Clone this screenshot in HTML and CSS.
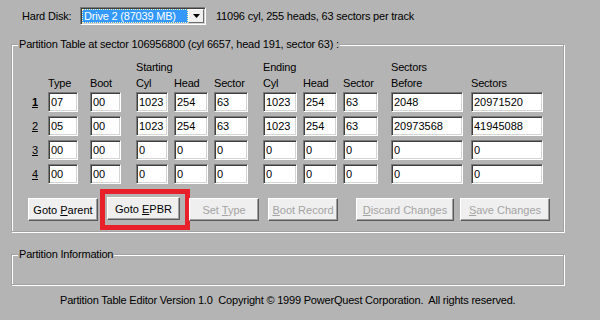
FILE: index.html
```html
<!DOCTYPE html>
<html lang="en">
<head>
  <meta charset="UTF-8">
  <title>Partition Table Editor</title>
  <link rel="stylesheet" href="styles.css">
</head>
<body>
  <div class="window">
    <div class="disk-row">
      <span class="disk-label">Hard Disk:</span>
      <div class="combo">
        <span class="combo-text"><span class="combo-focus">Drive 2 (87039 MB)</span></span>
        <span class="combo-btn">
          <svg width="7" height="4" viewBox="0 0 7 4"><path d="M0 0h7L3.5 4z" fill="#000"/></svg>
        </span>
      </div>
      <span class="geometry">11096 cyl, 255 heads, 63 sectors per track</span>
    </div>

    <fieldset class="group table-group">
      <legend>Partition Table at sector 106956800 (cyl 6657, head 191, sector 63) :</legend>

      <div class="ptable">
        <span></span><span></span><span></span>
        <span class="hd">Starting</span><span></span><span></span>
        <span class="hd">Ending</span><span></span><span></span>
        <span class="hd">Sectors</span><span></span>

        <span></span>
        <span class="hd">Type</span><span class="hd">Boot</span>
        <span class="hd">Cyl</span><span class="hd">Head</span><span class="hd">Sector</span>
        <span class="hd">Cyl</span><span class="hd">Head</span><span class="hd">Sector</span>
        <span class="hd">Before</span><span class="hd">Sectors</span>

        <span class="rownum current">1</span>
        <input class="cell w30" value="07"><input class="cell w31" value="00">
        <input class="cell w32" value="1023"><input class="cell w34" value="254"><input class="cell w34" value="63">
        <input class="cell w34" value="1023"><input class="cell w34" value="254"><input class="cell w35" value="63">
        <input class="cell w72" value="2048"><input class="cell w72" value="20971520">

        <span class="rownum">2</span>
        <input class="cell w30" value="05"><input class="cell w31" value="00">
        <input class="cell w32" value="1023"><input class="cell w34" value="254"><input class="cell w34" value="63">
        <input class="cell w34" value="1023"><input class="cell w34" value="254"><input class="cell w35" value="63">
        <input class="cell w72" value="20973568"><input class="cell w72" value="41945088">

        <span class="rownum">3</span>
        <input class="cell w30" value="00"><input class="cell w31" value="00">
        <input class="cell w32" value="0"><input class="cell w34" value="0"><input class="cell w34" value="0">
        <input class="cell w34" value="0"><input class="cell w34" value="0"><input class="cell w35" value="0">
        <input class="cell w72" value="0"><input class="cell w72" value="0">

        <span class="rownum">4</span>
        <input class="cell w30" value="00"><input class="cell w31" value="00">
        <input class="cell w32" value="0"><input class="cell w34" value="0"><input class="cell w34" value="0">
        <input class="cell w34" value="0"><input class="cell w34" value="0"><input class="cell w35" value="0">
        <input class="cell w72" value="0"><input class="cell w72" value="0">
      </div>

      <div class="buttons">
        <button class="btn b-parent">Goto <u>P</u>arent</button>
        <span class="highlight"><button class="btn b-epbr">Goto <u>E</u>PBR</button></span>
        <button class="btn b-type" disabled>Set <u>T</u>ype</button>
        <button class="btn b-boot" disabled><u>B</u>oot Record</button>
        <button class="btn b-discard" disabled><u>D</u>iscard Changes</button>
        <button class="btn b-save" disabled><u>S</u>ave Changes</button>
      </div>
    </fieldset>

    <fieldset class="group info-group">
      <legend>Partition Information</legend>
    </fieldset>

    <p class="copyright">Partition Table Editor Version 1.0&nbsp; Copyright &copy; 1999 PowerQuest Corporation.&nbsp; All rights reserved.</p>
  </div>
</body>
</html>
```

FILE: styles.css
```css
body {
  margin: 0;
  background: #b4b4b4;
  font-family: "Liberation Sans", Arial, sans-serif;
  font-size: 11px;
  letter-spacing: -0.2px;
  color: #000;
}
.window {
  width: 600px;
  height: 320px;
  overflow: hidden;
}

/* top line */
.disk-row {
  display: flex;
  align-items: center;
  height: 18px;
  padding-top: 7px;
}
.disk-label {
  margin-left: 22px;
  width: 58px;
}
.combo {
  display: flex;
  width: 122px;
  height: 14px;
  padding: 1px;
  border: 1px solid;
  border-color: #7a7a7a #fff #fff #7a7a7a;
  box-shadow: inset 1px 1px 0 #404040, inset -1px -1px 0 #d4d4d4;
  background: #fff;
}
.combo-text {
  flex: 1;
  background: #3399ff;
  color: #fff;
  display: flex;
}
.combo-focus {
  flex: 1;
  border: 1px dotted #fff8b0;
  line-height: 12px;
  padding-left: 1px;
}
.combo-btn {
  width: 14px;
  height: 12px;
  display: flex;
  align-items: center;
  justify-content: center;
  background: #f0f0f0;
  border: 1px solid;
  border-color: #fff #6a6a6a #6a6a6a #fff;
}
.geometry {
  margin-left: 10px;
}

/* group boxes */
.group {
  margin: 0 36px 0 11px;
  padding: 0 6px;
  border: 1px solid #a2a2a2;
  box-shadow: inset 1px 1px 0 #fff, 1px 1px 0 #fff;
}
.group legend {
  padding: 0 1px;
  line-height: 13px;
  background: #b4b4b4;
}
.table-group {
  margin-top: 13px;
  height: 184px;
  padding-top: 8px;
  padding-left: 19px;
}
.table-group legend {
  margin-left: -13px;
}
.info-group {
  margin-top: 16px;
  height: 35px;
}

/* partition table */
.ptable {
  display: grid;
  grid-template-columns: 17px 42px 46px 38px 40px 49px 40px 40px 48px 80px 72px;
  grid-template-rows: 16px 17px repeat(4, 24px);
  align-items: start;
}
.hd {
  line-height: 16px;
}
.rownum {
  text-decoration: underline;
  line-height: 20px;
  padding-left: 1px;
}
.rownum.current {
  font-weight: bold;
}
.cell {
  box-sizing: border-box;
  height: 20px;
  padding: 0 0 0 2px;
  margin: 0;
  font: inherit;
  color: #000;
  background: #fff;
  border: 1px solid;
  border-color: #7a7a7a #fff #fff #7a7a7a;
  box-shadow: inset 1px 1px 0 #404040, inset -1px -1px 0 #d4d4d4;
  outline: none;
}
.w30 { width: 30px; }
.w31 { width: 31px; }
.w32 { width: 32px; }
.w34 { width: 34px; }
.w35 { width: 35px; }
.w72 { width: 72px; }

/* buttons */
.buttons {
  display: flex;
  align-items: center;
  margin-top: 1px;
  margin-left: -3px;
}
.btn {
  box-sizing: border-box;
  height: 23px;
  padding: 0;
  font: inherit;
  color: #000;
  background: #efefef;
  border: 1px solid;
  border-color: #fff #5a5a5a #5a5a5a #fff;
  box-shadow: inset -1px -1px 0 #a0a0a0;
}
.btn:disabled {
  color: #a4a4a4;
}
.b-parent { width: 70px; }
.b-epbr { width: 73px; }
.b-type { width: 70px; }
.b-boot { width: 70px; margin-left: 9px; }
.b-discard { width: 98px; margin-left: 18px; }
.b-save { width: 90px; margin-left: 6px; }

.highlight {
  display: flex;
  margin: 0 -1px 0 2px;
  padding: 3px 5px 5px 2px;
  border: 5px solid #e8202a;
}

.copyright {
  margin: 9px 0 0 60px;
  line-height: 13px;
}
```
